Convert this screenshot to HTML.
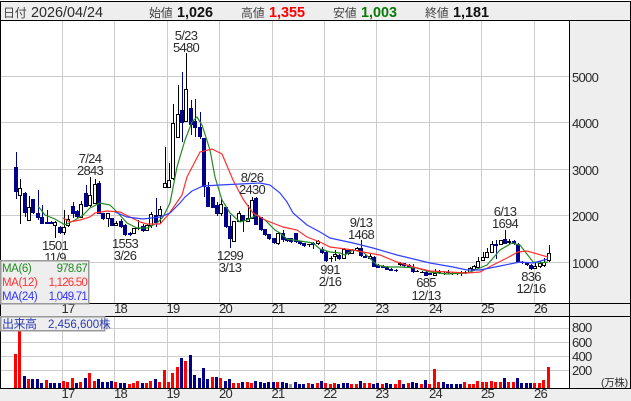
<!DOCTYPE html>
<html><head><meta charset="utf-8"><style>
html,body{margin:0;padding:0;background:#fff}
svg{display:block}
text{font-family:"Liberation Sans","Noto Sans CJK JP",sans-serif;font-size:13px;letter-spacing:-.7px;fill:#2b2b2b}
.j{font-size:12px;letter-spacing:-.2px}
.h{font-size:14.4px;letter-spacing:0}.b{font-size:14.4px;font-weight:bold;fill:#111;letter-spacing:0}
.c{text-anchor:middle}
.m{font-size:11.5px;letter-spacing:-.8px}
.n{font-size:11.5px;letter-spacing:-.4px}
</style></head><body>
<svg width="631" height="401" viewBox="0 0 631 401" xmlns="http://www.w3.org/2000/svg">
<rect x="0" y="0" width="631" height="401" fill="#fff"/>
<g shape-rendering="crispEdges">
<rect x="0" y="1" width="631" height="19" fill="#eee"/>
<rect x="569" y="20" width="62" height="369" fill="#eee"/>
<rect x="0" y="303" width="631" height="14" fill="#eee"/>
<rect x="0" y="388" width="631" height="13" fill="#eee"/>
<path fill="#ccc" d="M62 21h1v282h-1zM114 21h1v282h-1zM167 21h1v282h-1zM219 21h1v282h-1zM272 21h1v282h-1zM324 21h1v282h-1zM376 21h1v282h-1zM429 21h1v282h-1zM481 21h1v282h-1zM534 21h1v282h-1zM62 317h1v71h-1zM114 317h1v71h-1zM167 317h1v71h-1zM219 317h1v71h-1zM272 317h1v71h-1zM324 317h1v71h-1zM376 317h1v71h-1zM429 317h1v71h-1zM481 317h1v71h-1zM534 317h1v71h-1zM1 76h568v1h-568zM1 122h568v1h-568zM1 169h568v1h-568zM1 215h568v1h-568zM1 262h568v1h-568zM1 328h568v1h-568zM1 342h568v1h-568zM1 356h568v1h-568zM1 370h568v1h-568z"/>

<!-- candle wicks navy -->
<path stroke="#00008b" stroke-width="1" fill="none" d="M16.5 152V199M25.5 192V217M33.5 199V214M38.5 190V220M42.5 205V224M47.5 210V224M51.5 221V224M60.5 226V234M73.5 202V218M77.5 210V218M86.5 185V207M99.5 181V214M103.5 213V220M112.5 218V226M121.5 219V228M125.5 224V236M130.5 232V236M143.5 224V232M156.5 198V227M182.5 72V142M191.5 100V135M195.5 99V137M200.5 112V139M204.5 138V197M208.5 182V207M213.5 197V208M217.5 202V216M226.5 207V228M230.5 215V248M243.5 215V232M256.5 197V225M261.5 217V231M265.5 229V236M269.5 234V240M274.5 238V244M283.5 230V242M287.5 238V242M291.5 238V243M296.5 233V243M300.5 241V245M304.5 243V247M313.5 242V249M322.5 247V254M326.5 251V262M339.5 254V260M348.5 249V255M361.5 240V257M365.5 254V258M374.5 256V267M378.5 264V268M383.5 265V268M387.5 266V270M391.5 268V271M396.5 269V272M404.5 263V267M409.5 264V268M413.5 264V273M426.5 271V276M430.5 273V275M496.5 240V259M505.5 230V244M514.5 240V245M518.5 243V262M522.5 261V264M527.5 262V266M531.5 264V270"/>
<!-- candle wicks black -->
<path stroke="#000" stroke-width="1" fill="none" d="M20.5 179V224M29.5 196V220M55.5 221V238M64.5 210V235M68.5 215V227M81.5 201V217M90.5 177V207M95.5 179V204M108.5 213V227M116.5 221V226M134.5 228V234M138.5 220V230M147.5 224V231M151.5 212V228M160.5 206V224M165.5 147V188M169.5 163V188M173.5 104V180M178.5 85V138M186.5 53V121M221.5 199V216M234.5 221V242M239.5 211V221M248.5 205V221M252.5 197V218M278.5 232V245M309.5 244V247M318.5 240V245M331.5 256V262M335.5 250V261M344.5 248V259M352.5 249V254M357.5 247V251M370.5 254V259M400.5 262V266M417.5 270V272M422.5 271V273M435.5 269V276M439.5 270V274M444.5 271V275M448.5 270V274M452.5 272V275M457.5 272V275M461.5 271V276M465.5 271V274M470.5 267V272M474.5 265V270M478.5 257V267M483.5 252V260M487.5 248V257M492.5 241V252M501.5 240V244M509.5 239V245M535.5 263V269M540.5 261V268M544.5 258V267M549.5 245V262"/>
<!-- navy bodies -->
<path fill="#00008b" d="M14 167h4v25h-4zM23 193h4v20h-4zM31 199h4v14h-4zM36 213h4v5h-4zM40 217h4v7h-4zM45 222h4v2h-4zM49 222h4v2h-4zM58 227h4v6h-4zM71 206h4v8h-4zM75 211h4v6h-4zM84 193h4v14h-4zM97 183h4v31h-4zM101 213h4v6h-4zM110 218h4v8h-4zM119 221h4v6h-4zM123 225h4v10h-4zM128 233h4v2h-4zM141 226h4v5h-4zM154 215h4v8h-4zM180 110h4v13h-4zM189 108h4v17h-4zM193 121h4v7h-4zM198 127h4v10h-4zM202 138h4v49h-4zM206 187h4v20h-4zM211 197h4v11h-4zM215 205h4v9h-4zM224 207h4v20h-4zM228 226h4v13h-4zM241 215h4v6h-4zM254 198h4v27h-4zM259 217h4v13h-4zM263 229h4v6h-4zM267 234h4v5h-4zM272 238h4v5h-4zM281 233h4v7h-4zM285 238h4v3h-4zM289 238h4v4h-4zM294 233h4v9h-4zM298 241h4v3h-4zM302 243h4v3h-4zM311 243h4v2h-4zM320 249h4v4h-4zM324 252h4v9h-4zM337 255h4v4h-4zM346 250h4v4h-4zM359 248h4v8h-4zM363 256h4v2h-4zM372 257h4v10h-4zM376 265h4v3h-4zM381 266h4v2h-4zM385 267h4v3h-4zM389 269h4v2h-4zM394 270h4v1h-4zM402 263h4v3h-4zM407 265h4v3h-4zM411 268h4v4h-4zM424 272h4v4h-4zM428 273h4v2h-4zM494 244h4v2h-4zM503 239h4v5h-4zM512 241h4v3h-4zM516 244h4v18h-4zM520 262h4v1h-4zM525 263h4v2h-4zM529 265h4v4h-4z"/>
<!-- thin black bodies -->
<path fill="#000" d="M136 228h4v1h-4zM307 244h4v1h-4zM329 258h4v1h-4zM398 263h4v2h-4zM415 271h4v1h-4zM420 272h4v1h-4zM437 272h4v1h-4zM442 273h4v1h-4zM446 272h4v1h-4zM450 273h4v1h-4zM455 273h4v1h-4zM459 273h4v1h-4zM463 272h4v1h-4zM507 241h4v2h-4z"/>
<!-- white bodies -->
<path fill="#fff" stroke="#000" stroke-width="1" d="M18.5 188.5h3v7h-3zM27.5 207.5h3v13h-3zM53.5 222.5h3v3h-3zM62.5 227.5h3v5h-3zM66.5 219.5h3v6h-3zM79.5 204.5h3v13h-3zM88.5 195.5h3v10h-3zM93.5 184.5h3v19h-3zM106.5 213.5h3v5h-3zM114.5 223.5h3v2h-3zM132.5 228.5h3v5h-3zM145.5 225.5h3v5h-3zM149.5 214.5h3v11h-3zM158.5 209.5h3v6h-3zM163.5 183.5h3v4h-3zM167.5 180.5h3v7h-3zM171.5 123.5h3v55h-3zM176.5 114.5h3v23h-3zM184.5 89.5h3v32h-3zM219.5 204.5h3v9h-3zM232.5 221.5h3v20h-3zM237.5 213.5h3v8h-3zM246.5 218.5h3v3h-3zM250.5 200.5h3v18h-3zM276.5 233.5h3v10h-3zM316.5 241.5h3v2h-3zM333.5 254.5h3v2h-3zM342.5 249.5h3v9h-3zM350.5 250.5h3v3h-3zM355.5 248.5h3v2h-3zM368.5 256.5h3v2h-3zM433.5 273.5h3v2h-3zM468.5 268.5h3v4h-3zM472.5 266.5h3v3h-3zM476.5 261.5h3v6h-3zM481.5 257.5h3v3h-3zM485.5 252.5h3v5h-3zM490.5 244.5h3v8h-3zM499.5 240.5h3v4h-3zM533.5 266.5h3v2h-3zM538.5 263.5h3v3h-3zM542.5 262.5h3v3h-3zM547.5 253.5h3v7h-3z"/>
</g>
<!-- moving averages -->
<polyline fill="none" stroke="#248a24" stroke-width="1.2" points="38,206 45,215 55,219 65,225 75,220 83,215 90,208 100,203 110,205 118,213 127,223 137,228 147,228 157,223 163,217 170,203 177,167 185,140 192,122 197,117 202,125 210,150 215,177 222,200 230,213 240,222 247,220 257,215 265,220 275,230 280,233 287,239 300,241 313,243 320,249 330,252 340,253 345,255 353,250 363,252 377,265 387,267 400,267 417,268 430,272 447,274 467,273 470,272 487,265 500,250 512,243 520,245 533,262 540,263 548,262"/>
<polyline fill="none" stroke="#ff3030" stroke-width="1.2" points="63,218 70,222 80,220 90,217 95,213 107,211 120,212 130,217 140,222 147,224 160,224 168,215 173,208 182,195 187,177 200,152 212,149 222,154 233,180 243,199 253,213 265,220 283,227 297,230 307,237 320,242 330,247 353,250 363,252 380,255 397,262 417,268 430,271 467,273 480,272 493,265 507,258 518,252 527,251 548,257"/>
<polyline fill="none" stroke="#3040ff" stroke-width="1.2" points="115,212 127,217 143,219 160,217 170,213 180,203 185,197 192,191 203,186 220,185 240,184 260,183 270,185 280,193 287,202 293,213 307,225 320,232 330,238 353,243 373,248 397,255 430,263 453,267 467,270 480,270 500,266 520,262 533,263 548,259"/>
<!-- volume -->
<g shape-rendering="crispEdges">
<path fill="#ff0000" d="M14 354h3v34h-3zM18 331h3v57h-3zM27 379h3v9h-3zM45 380h3v8h-3zM62 381h3v7h-3zM66 382h3v6h-3zM71 378h3v10h-3zM79 382h3v6h-3zM88 373h3v15h-3zM93 381h3v7h-3zM114 382h3v6h-3zM128 384h3v4h-3zM132 383h3v5h-3zM136 381h3v7h-3zM145 383h3v5h-3zM149 381h3v7h-3zM158 382h3v6h-3zM163 370h3v18h-3zM167 382h3v6h-3zM171 373h3v15h-3zM176 367h3v21h-3zM184 361h3v27h-3zM211 377h3v11h-3zM219 378h3v10h-3zM232 383h3v5h-3zM237 383h3v5h-3zM246 382h3v6h-3zM250 383h3v5h-3zM276 382h3v6h-3zM307 383h3v5h-3zM316 383h3v5h-3zM324 383h3v5h-3zM329 384h3v4h-3zM333 383h3v5h-3zM350 384h3v4h-3zM355 384h3v4h-3zM363 383h3v5h-3zM368 383h3v5h-3zM381 384h3v4h-3zM394 384h3v4h-3zM398 380h3v8h-3zM407 383h3v5h-3zM420 384h3v4h-3zM428 384h3v4h-3zM433 369h3v19h-3zM437 382h3v6h-3zM463 382h3v6h-3zM468 384h3v4h-3zM472 384h3v4h-3zM476 381h3v7h-3zM481 382h3v6h-3zM485 382h3v6h-3zM490 381h3v7h-3zM494 382h3v6h-3zM499 382h3v6h-3zM507 382h3v6h-3zM512 382h3v6h-3zM533 383h3v5h-3zM538 383h3v5h-3zM542 380h3v8h-3zM547 367h3v21h-3z"/>
<path fill="#00008b" d="M23 376h3v12h-3zM31 379h3v9h-3zM36 379h3v9h-3zM40 383h3v5h-3zM49 383h3v5h-3zM53 383h3v5h-3zM58 383h3v5h-3zM75 383h3v5h-3zM84 378h3v10h-3zM97 379h3v9h-3zM101 382h3v6h-3zM106 382h3v6h-3zM110 381h3v7h-3zM119 383h3v5h-3zM123 383h3v5h-3zM141 383h3v5h-3zM154 379h3v9h-3zM180 358h3v30h-3zM189 355h3v33h-3zM193 375h3v13h-3zM198 378h3v10h-3zM202 368h3v20h-3zM206 379h3v9h-3zM215 377h3v11h-3zM224 381h3v7h-3zM228 379h3v9h-3zM241 382h3v6h-3zM254 381h3v7h-3zM259 382h3v6h-3zM263 383h3v5h-3zM267 382h3v6h-3zM272 382h3v6h-3zM281 382h3v6h-3zM285 383h3v5h-3zM294 382h3v6h-3zM298 384h3v4h-3zM302 384h3v4h-3zM311 384h3v4h-3zM320 381h3v7h-3zM337 384h3v4h-3zM342 383h3v5h-3zM346 383h3v5h-3zM359 381h3v7h-3zM372 384h3v4h-3zM376 383h3v5h-3zM385 383h3v5h-3zM389 384h3v4h-3zM402 384h3v4h-3zM411 382h3v6h-3zM415 383h3v5h-3zM424 380h3v8h-3zM442 382h3v6h-3zM446 384h3v4h-3zM450 384h3v4h-3zM455 384h3v4h-3zM459 384h3v4h-3zM503 378h3v10h-3zM516 378h3v10h-3zM520 383h3v5h-3zM525 383h3v5h-3zM529 383h3v5h-3z"/>
<path fill="#999" d="M289 384h3v4h-3z"/>
<!-- frame lines -->
<path fill="#000" d="M0 1h631v1h-631zM0 20h631v1h-631zM0 303h631v1h-631zM0 316h631v1h-631zM0 388h631v1h-631zM0 1h1v388h-1zM630 1h1v388h-1zM569 20h1v369h-1z"/>
</g>
<!-- chart labels -->
<text class="c" x="186" y="40">5/23</text><text class="c" x="186" y="52">5480</text>
<text class="c" x="90" y="163">7/24</text><text class="c" x="90" y="175">2843</text>
<text class="c" x="252" y="182">8/26</text><text class="c" x="252" y="194">2430</text>
<text class="c" x="55" y="250">1501</text><text class="c" x="55" y="262">11/9</text>
<text class="c" x="125" y="248">1553</text><text class="c" x="125" y="260">3/26</text>
<text class="c" x="230" y="260">1299</text><text class="c" x="230" y="272">3/13</text>
<text class="c" x="330" y="274">991</text><text class="c" x="330" y="286">2/16</text>
<text class="c" x="361" y="227">9/13</text><text class="c" x="361" y="239">1468</text>
<text class="c" x="426" y="287">685</text><text class="c" x="426" y="300">12/13</text>
<text class="c" x="505" y="216">6/13</text><text class="c" x="505" y="228">1694</text>
<text class="c" x="531" y="281">836</text><text class="c" x="531" y="293">12/16</text>
<!-- header -->
<text class="j" x="3" y="17" style="fill:#444">日付</text>
<text class="h" x="31" y="17">2026/04/24</text>
<text class="j" x="149" y="17" style="fill:#444">始値</text><text class="b" x="177" y="17">1,026</text>
<text class="j" x="241" y="17" style="fill:#444">高値</text><text class="b" x="269" y="17" style="fill:#f00">1,355</text>
<text class="j" x="333" y="17" style="fill:#444">安値</text><text class="b" x="361" y="17" style="fill:#0a7a0a">1,003</text>
<text class="j" x="425" y="17" style="fill:#444">終値</text><text class="b" x="453" y="17">1,181</text>
<!-- axis labels -->
<g>
<text x="572" y="82">5000</text><text x="572" y="128">4000</text><text x="572" y="175">3000</text><text x="572" y="221">2000</text><text x="572" y="268">1000</text>
<text x="572" y="332">800</text><text x="572" y="347">600</text><text x="572" y="361">400</text><text x="572" y="375">200</text>
<text x="601" y="386" style="font-size:10.5px;letter-spacing:-.3px">(万株)</text>
<text class="c" x="68" y="313">17</text><text class="c" x="120.5" y="313">18</text><text class="c" x="173" y="313">19</text><text class="c" x="225.5" y="313">20</text><text class="c" x="278" y="313">21</text><text class="c" x="330" y="313">22</text><text class="c" x="382" y="313">23</text><text class="c" x="435.5" y="313">24</text><text class="c" x="487.5" y="313">25</text><text class="c" x="540.5" y="313">26</text>
<text class="c" x="68" y="398">17</text><text class="c" x="120.5" y="398">18</text><text class="c" x="173" y="398">19</text><text class="c" x="225.5" y="398">20</text><text class="c" x="278" y="398">21</text><text class="c" x="330" y="398">22</text><text class="c" x="382" y="398">23</text><text class="c" x="435.5" y="398">24</text><text class="c" x="487.5" y="398">25</text><text class="c" x="540.5" y="398">26</text>
</g>
<!-- MA legend -->
<rect x="0.75" y="260.75" width="88" height="43" fill="#eee" stroke="#999" stroke-width="1.5"/>
<text class="n" x="2" y="272" style="fill:#228a22">MA(6)</text><text class="m" x="87" y="272" text-anchor="end" style="fill:#228a22">978.67</text>
<text class="n" x="2" y="286" style="fill:#f33">MA(12)</text><text class="m" x="87" y="286" text-anchor="end" style="fill:#f33">1,126.50</text>
<text class="n" x="2" y="300" style="fill:#33f">MA(24)</text><text class="m" x="87" y="300" text-anchor="end" style="fill:#33f">1,049.71</text>
<!-- volume legend -->
<rect x="0.75" y="316.75" width="104" height="14" fill="#eee" stroke="#999" stroke-width="1.5"/>
<text class="j" x="2" y="328" style="fill:#2a3ab0;letter-spacing:-.5px">出来高</text><text x="48" y="328" style="font-size:11.5px;letter-spacing:0;fill:#2a3ab0">2,456,600株</text>
</svg>
</body></html>
